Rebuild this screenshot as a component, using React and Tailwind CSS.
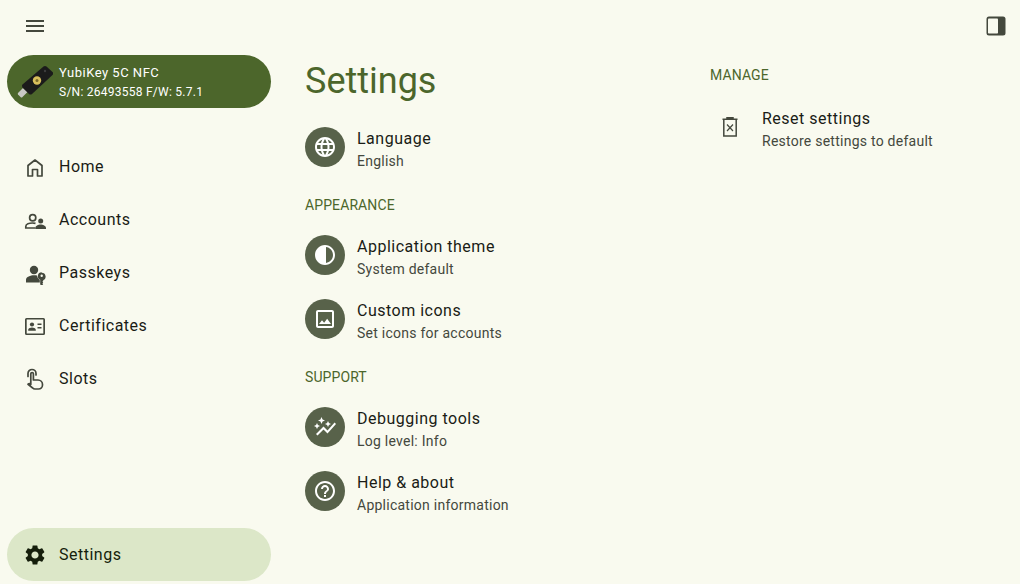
import React from "react";
import {
  MdMenu, MdSettings,
  MdOutlineLanguage, MdOutlineContrast, MdOutlineImage, MdOutlineAutoGraph, MdHelpOutline,
} from "react-icons/md";

const KeyIcon = () => (
  <svg width="36" height="36" viewBox="0 0 36 36" className="shrink-0">
    <path d="M1 29 L6 24 L10.500 28 L5.500 33 Q4.500 34 3.500 33 L1 30.500 Q.5 29.500 1 29 Z" fill="#c9c9c5" />
    <path d="M5.500 20.500 L26.500 2.500 Q28 1.500 29.500 2.500 L35.500 8 Q37 9.500 35.500 11 L15 30 Q13.500 31 12 30 L5.500 23.500 Q4.500 21.500 5.500 20.500 Z" fill="#1b1b1b" />
    <circle cx="20" cy="16.500" r="4.200" fill="#d8bf5c" />
    <circle cx="20" cy="16.500" r="1.500" fill="#7a6a2a" />
    <circle cx="28" cy="7" r="1.200" fill="#3d3d3d" />
  </svg>
);

const HomeIcon = ({ className }) => (
  <svg viewBox="0 0 24 24" className={className} fill="none" stroke="currentColor" strokeWidth="1.700" strokeLinejoin="round">
    <path d="M5 21V10.500L12 5l7 5.500V21h-4.500v-6.500h-5V21z" />
  </svg>
);

const AccountsIcon = ({ className }) => (
  <svg viewBox="0 0 24 24" className={className}>
    <circle cx="9.700" cy="9.700" r="3.100" fill="none" stroke="currentColor" strokeWidth="1.700" />
    <path d="M12.500 15.300c-.9-.2-1.900-.3-3-.3-3.200 0-6.700 1.200-6.700 3.500V20h9.500" fill="none" stroke="currentColor" strokeWidth="1.700" />
    <circle cx="17.700" cy="13" r="2.500" fill="currentColor" />
    <path d="M12.300 21v-1.200c0-2 3-3.400 5.300-3.400s5.400 1.400 5.400 3.400V21z" fill="currentColor" />
  </svg>
);

const PasskeyIcon = ({ className }) => (
  <svg viewBox="0 0 24 24" className={className} fill="currentColor">
    <circle cx="11" cy="9" r="4.200" />
    <path d="M3 21.500v-2.700c0-3 4.500-4.600 8-4.600 1 0 2 .1 3 .3.200 1.900 1.300 3.400 2.800 4.300v2.700z" />
    <path fillRule="evenodd" d="M18.700 11.800a3.900 3.900 0 0 1 1.500 7.500V20l-.8.800.8.800-.8.800.8.800-1.500 1.500-1.500-1.300v-4.600a3.900 3.900 0 0 1 1.500-7.500zm0 1.800a1.200 1.200 0 1 0 0 2.400 1.200 1.200 0 0 0 0-2.400z" />
  </svg>
);

const CardIcon = ({ className }) => (
  <svg viewBox="0 0 24 24" className={className} fill="currentColor">
    <path fillRule="evenodd" d="M3.500 4h17A1.500 1.500 0 0 1 22 5.500v14a1.500 1.500 0 0 1-1.500 1.500h-17A1.500 1.500 0 0 1 2 19.500v-14A1.500 1.500 0 0 1 3.500 4zm.2 1.600v13.800h16.600V5.600H3.700z" />
    <circle cx="9" cy="10.500" r="2.100" />
    <path d="M5.200 16.800v-1c0-1.400 2.400-2.200 3.800-2.200s3.800.8 3.800 2.200v1z" />
    <rect x="14.500" y="9.500" width="4" height="1.500" />
    <rect x="14.500" y="13" width="4" height="1.500" />
  </svg>
);

const SlotsIcon = ({ className }) => (
  <svg viewBox="0 0 24 24" className={className} fill="none" stroke="currentColor" strokeWidth="1.700" strokeLinejoin="round" strokeLinecap="round">
    <path d="M5 9.500V6.500a4 4 0 0 1 8 0V8" />
    <path d="M7.800 17.500V6.800a1.300 1.300 0 0 1 2.600 0V13h4.600a4.500 4.500 0 0 1 4.500 4.500v.5a4 4 0 0 1-4 4h-3.600a3 3 0 0 1-2.200-1L5 17.300l.8-.6a1.500 1.500 0 0 1 2 .8z" />
  </svg>
);

const ResetIcon = ({ className }) => (
  <svg viewBox="0 0 24 24" className={className} fill="none" stroke="currentColor" strokeWidth="1.500">
    <path d="M4.500 4.200h15M9 4V2.800h6V4" />
    <path d="M5.800 4.200V21h12.400V4.200" />
    <path d="M9 9.500l6 6.500M15 9.500l-6 6.500" strokeWidth="1.200" />
  </svg>
);

const PanelIcon = () => (
  <svg viewBox="0 0 20 20" className="w-[20px] h-[20px]">
    <rect x="0.500" y="0.500" width="19" height="19" rx="2.500" fill="#44483d" />
    <rect x="2" y="2.500" width="10" height="15" rx="0.800" fill="#f9faef" />
  </svg>
);

const nav = [
  { label: "Home", Icon: HomeIcon },
  { label: "Accounts", Icon: AccountsIcon },
  { label: "Passkeys", Icon: PasskeyIcon },
  { label: "Certificates", Icon: CardIcon },
  { label: "Slots", Icon: SlotsIcon },
];

function NavItem({ label, Icon }) {
  return (
    <div className="h-[53px] flex items-center pl-[16px] text-[#44483d]">
      <Icon className="w-[24px] h-[24px] shrink-0" />
      <span className="ml-[12px] text-[16px] tracking-[0.5px] text-[#1a1c16]">{label}</span>
    </div>
  );
}

function SectionLabel({ children }) {
  return (
    <div className="h-[44px] pt-[8px] flex items-center text-[14px] tracking-[0.1px] text-[#4c662b]">{children}</div>
  );
}

function Row({ Icon, title, sub, plain }) {
  return (
    <div className="h-[64px] flex items-center">
      {plain ? (
        <div className="w-[40px] h-[40px] flex items-center justify-center text-[#44483d] shrink-0">
          <Icon className="w-[24px] h-[24px]" />
        </div>
      ) : (
        <div className="w-[40px] h-[40px] rounded-full bg-[#58624a] flex items-center justify-center text-white shrink-0">
          <Icon className="w-[24px] h-[24px]" />
        </div>
      )}
      <div className="ml-[12px] pt-[4px] flex flex-col">
        <span className="text-[16px] leading-[24px] tracking-[0.5px] text-[#1a1c16]">{title}</span>
        <span className="text-[14px] leading-[20px] tracking-[0.25px] text-[#44483d]">{sub}</span>
      </div>
    </div>
  );
}

export default function App() {
  return (
    <div className="w-[1020px] h-[584px] bg-[#f9faef] flex overflow-hidden font-['Roboto',sans-serif]">
      <aside className="w-[278px] h-full flex flex-col pl-[7px] pr-[7px] pb-[3px]">
        <div className="h-[52px] flex items-center pl-[16px] text-[#44483d]">
          <MdMenu className="w-[24px] h-[24px]" />
        </div>
        <div className="mt-[3px] h-[53px] rounded-full bg-[#4c662b] flex items-center text-white pl-[10px]">
          <KeyIcon />
          <div className="ml-[6px] flex flex-col leading-[20px]">
            <span className="mt-[1px] text-[13px] tracking-[0.5px]">YubiKey 5C NFC</span>
            <span className="-mt-[1px] text-[12px] tracking-[0.25px]">S/N: 26493558 F/W: 5.7.1</span>
          </div>
        </div>
        <nav className="mt-[32px] flex-1">
          {nav.map((n) => (
            <NavItem key={n.label} {...n} />
          ))}
        </nav>
        <div className="h-[53px] rounded-full bg-[#dce7c8] flex items-center pl-[16px] text-[#151e0b]">
          <MdSettings className="w-[24px] h-[24px]" />
          <span className="ml-[12px] text-[16px] tracking-[0.5px]">Settings</span>
        </div>
      </aside>
      <main className="flex-1 flex flex-col">
        <div className="h-[52px] flex items-center justify-end pr-[14px]">
          <PanelIcon />
        </div>
        <div className="flex pl-[27px]">
          <div className="w-[405px]">
            <h1 className="h-[64px] pb-[4px] flex items-center text-[36px] text-[#4c662b] leading-[40px] -mt-[1px]">Settings</h1>
            <Row Icon={MdOutlineLanguage} title="Language" sub="English" />
            <SectionLabel>APPEARANCE</SectionLabel>
            <Row Icon={MdOutlineContrast} title="Application theme" sub="System default" />
            <Row Icon={MdOutlineImage} title="Custom icons" sub="Set icons for accounts" />
            <SectionLabel>SUPPORT</SectionLabel>
            <Row Icon={MdOutlineAutoGraph} title="Debugging tools" sub="Log level: Info" />
            <Row Icon={MdHelpOutline} title="Help & about" sub="Application information" />
          </div>
          <div className="flex-1 -mt-[1px]">
            <div className="h-[44px] pt-[4px] flex items-center text-[14px] tracking-[0.1px] text-[#4c662b]">MANAGE</div>
            <Row plain Icon={ResetIcon} title="Reset settings" sub="Restore settings to default" />
          </div>
        </div>
      </main>
    </div>
  );
}
